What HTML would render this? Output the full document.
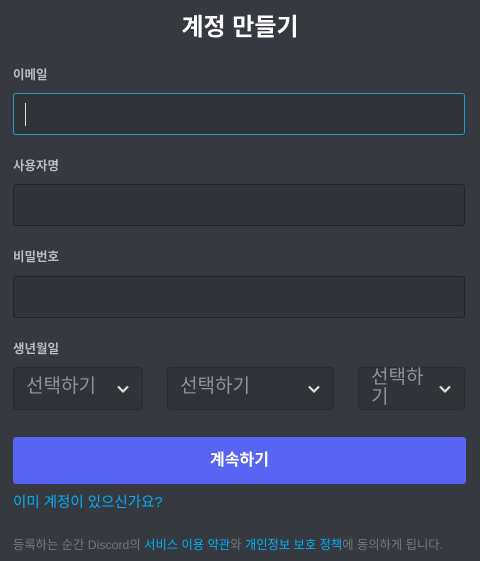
<!DOCTYPE html>
<html><head><meta charset="utf-8"><style>
*{margin:0;padding:0;box-sizing:border-box}
body{width:480px;height:561px;background:#36393f;font-family:"Liberation Sans","Noto Sans CJK KR",sans-serif;position:relative;overflow:hidden}
.a{position:absolute}
.t{left:0;width:480px;top:10px;text-align:center;color:#fff;font-size:24px;font-weight:700;line-height:36px}
.l{left:13px;color:#b9bbbe;font-size:12.5px;font-weight:700;line-height:16px}
.i{left:13px;width:452px;height:42px;background:#303338;border:1px solid #222428;border-radius:3px}
.s{height:43px;top:367px;background:#303338;border:1px solid #2a2c31;border-radius:4px;color:#8e9297;font-size:19px}
.s span{position:absolute;left:12px;top:9px;line-height:20px}
.s svg{position:absolute;right:12px;top:14px}
</style></head><body>
<div class="a t">계정 만들기</div>
<div class="a l" style="top:67px">이메일</div>
<div class="a i" style="top:93px;border-color:#1e9bd0"><div class="a" style="left:11px;top:9px;width:1px;height:23px;background:#dcddde"></div></div>
<div class="a l" style="top:158px">사용자명</div>
<div class="a i" style="top:184px"></div>
<div class="a l" style="top:249px">비밀번호</div>
<div class="a i" style="top:276px"></div>
<div class="a l" style="top:341px">생년월일</div>
<div class="a s" style="left:13px;width:130px"><span>선택하기</span><svg width="14" height="14" viewBox="0 0 14 14"><path d="M2 4.5l5 5 5-5" stroke="#dcddde" stroke-width="2.2" fill="none"/></svg></div>
<div class="a s" style="left:167px;width:167px"><span>선택하기</span><svg width="14" height="14" viewBox="0 0 14 14"><path d="M2 4.5l5 5 5-5" stroke="#dcddde" stroke-width="2.2" fill="none"/></svg></div>
<div class="a s" style="left:358px;width:107px"><span style="top:0px;width:62px;line-height:20px">선택하기</span><svg width="14" height="14" viewBox="0 0 14 14"><path d="M2 4.5l5 5 5-5" stroke="#dcddde" stroke-width="2.2" fill="none"/></svg></div>
<div class="a" style="left:13px;top:437px;width:453px;height:47px;background:#5865f2;border-radius:3px;color:#fff;font-size:16px;font-weight:700;text-align:center;line-height:47px">계속하기</div>
<div class="a" style="left:13px;top:494px;color:#00aff4;font-size:14.5px;line-height:18px">이미 계정이 있으신가요?</div>
<div class="a" style="left:13px;top:537px;color:#72767d;font-size:12.3px;line-height:16px;white-space:nowrap">등록하는 순간 Discord의 <span style="color:#00aff4">서비스 이용 약관</span>와 <span style="color:#00aff4">개인정보 보호 정책</span>에 동의하게 됩니다.</div>
</body></html>
